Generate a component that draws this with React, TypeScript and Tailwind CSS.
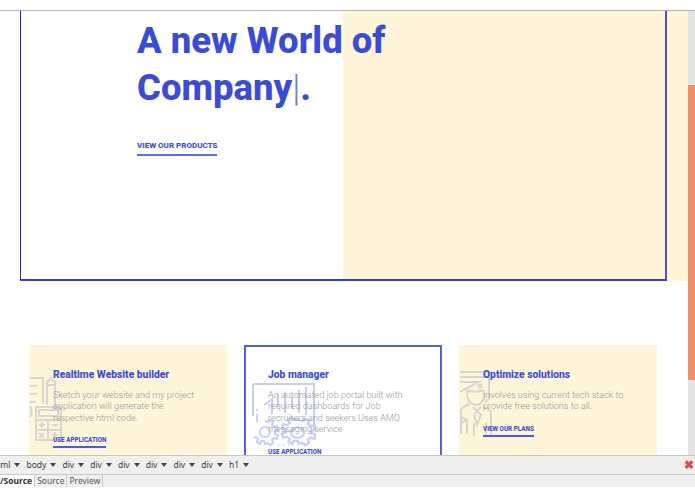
const roboto = "font-['Roboto',sans-serif]";

function CalcIcon() {
  return (
    <svg viewBox="0 0 34 64" fill="none" stroke="#d8d6d2" strokeWidth="2" className="absolute left-0 top-[32px] w-[34px] h-[64px]">
      <path d="M1 1h13v26M1 9h7M1 17h7M1 25h6" />
      <path d="M18 28V5l4-4 4 4v24M18 8h8" />
      <path d="M1 29c2 3 2 8 0 11" />
      <path d="M7 30h25v33H7z" />
      <path d="M10 33h19v6H10zM7 43h25M7 53h25M19 43v20" />
      <path d="M10 48h6M13 45v6M23 48h6M10 56l5 5M15 56l-5 5M23 58h6M26 55v6" />
    </svg>
  );
}

function GearIcon() {
  return (
    <svg viewBox="0 0 64 64" fill="none" stroke="#cbcdf3" strokeWidth="2" className="absolute left-[6px] top-[36px] w-[64px] h-[64px]">
      <path d="M1 1h61v46M1 1v32" />
      <path d="M12 22l8-6v15M26 24V11M33 30V9M40 26V14M47 30V7M54 32V4" />
      <path d="M5 26v2M5 31v8" />
      <g transform="translate(2 0)">
        <path d="M11 38l3 1 2-2 3 2-1 3 2 2 3-1 1 4-3 1v3l3 1-1 4-3-1-2 2 1 3-3 2-2-2-3 1-1-3H7l-1 3-3-2 1-3-2-2-2 1" />
        <circle cx="11" cy="49" r="5" />
      </g>
      <g transform="translate(45.5 49.5) scale(1.3 1.05) translate(-45 -49)">
        <path d="M46 37l3 1 2-2 3 2-1 3 2 2 3-1 1 4-3 1v3l3 1-1 4-3-1-2 2 1 3-3 2-2-2-3 1-1-3h-3l-1 3-3-2 1-3-2-2-3 1-1-4 3-1v-3l-3-1 1-4 3 1 2-2-1-3 3-2 2 2z" />
        <circle cx="45" cy="49" r="5" />
      </g>
      <path d="M26 62h1M31 62h1M36 62h1" />
    </svg>
  );
}

function PersonIcon() {
  return (
    <svg viewBox="0 0 34 66" fill="none" stroke="#d6d5d2" strokeWidth="2" className="absolute left-0 top-[26px] w-[34px] h-[66px]">
      <path d="M1 1h30M1 6h27M1 11h18l-18 10" />
      <path d="M30 6v22l-4 3" />
      <circle cx="21" cy="15" r="1.5" />
      <path d="M9 18c-2 4-1 11 3 14 4 3 9 2 11-1 2-3 3-6 2-9" />
      <path d="M9 20c5 1 11 1 16-1" />
      <path d="M11 33c-4 2-8 3-9 6v24M2 46l6 3-6 3M8 49v14" />
      <path d="M14 36l4 4 4-4M18 40l-3 4 3 10 4-10zM24 36c3 1 7 2 8 5v24M27 52v13M15 52v13" />
    </svg>
  );
}

function Card({ title, lines, link, boxed, icon }: { title: string; lines: string[]; link: string; boxed?: boolean; icon: React.ReactNode }) {
  return (
    <div className={`relative w-[198px] h-[170px] ${boxed ? "border-2 border-[#5660d2] bg-white px-[22px] pt-[21px]" : "bg-[#fff5d8] px-[24px] pt-[23px]"}`}>
      {icon}
      <h3 className={`relative text-[10.3px] leading-[13px] font-extrabold text-[#3a4bd6] whitespace-nowrap ${roboto}`}>{title}</h3>
      <p className={`relative mt-[8.5px] text-[9.1px] leading-[11.5px] font-light text-[#96969e] whitespace-nowrap ${roboto}`}>
        {lines.map((l) => (
          <span key={l} className="block">{l}</span>
        ))}
      </p>
      <a className={`relative inline-block mt-[11px] pb-[1px] text-[6.3px] leading-[9px] font-extrabold text-[#3a4bd6] border-b-2 border-[#4f5cd8] ${roboto}`}>{link}</a>
    </div>
  );
}

const crumbs = ["html", "body", "div", "div", "div", "div", "div", "div", "h1"];

export default function App() {
  return (
    <div className="flex h-[494px] w-[695px] flex-col overflow-hidden bg-white">
      <div className="h-[11px] shrink-0 border-b border-[#b4b4b4] bg-white" />

      <div className="flex min-h-0 flex-1">
        <div className="w-[688px] shrink-0 overflow-hidden">
          {/* hero */}
          <div className="flex h-[270px] pl-[20px]">
            <div className={`relative z-10 w-[323px] border-b-2 border-l border-b-[#3a3ad0] border-l-[#2020c8] pl-[116px] ${roboto}`}>
              <h1 className="pt-[6px] text-[36.5px] leading-[47px] font-extrabold text-[#3a4bd6] whitespace-nowrap">
                A new World of
                <br />
                Company<span className="font-light text-[#6f7bdc]">|</span>.
              </h1>
              <a className="mt-[30px] inline-block border-b-2 border-[#5f6dda] pb-[3px] text-[8px] leading-[10px] font-extrabold text-[#3a4bd6]">
                VIEW OUR PRODUCTS
              </a>
            </div>
            <div className="flex-1 bg-[#fff5d8]">
              <div className="h-full w-[324px] border-b-2 border-r-2 border-b-[#3a3ad0] border-r-[#5050c4]" />
            </div>
          </div>

          {/* cards */}
          <div className="mt-[64px] flex gap-[17px] pl-[29px]">
            <Card
              title="Realtime Website builder"
              lines={["Sketch your website and my project", "application will generate the", "respective html code."]}
              link="USE APPLICATION"
              icon={<CalcIcon />}
            />
            <Card
              boxed
              title="Job manager"
              lines={["An automated job portal built with", "required dashboards for Job", "recruiters and seekers.Uses AMQ", "messaging service"]}
              link="USE APPLICATION"
              icon={<GearIcon />}
            />
            <Card
              title="Optimize solutions"
              lines={["Involves using current tech stack to", "provide free solutions to all."]}
              link="VIEW OUR PLANS"
              icon={<PersonIcon />}
            />
          </div>
        </div>

        {/* scrollbar */}
        <div className="flex w-[7px] shrink-0 flex-col bg-[#e4e4e4]">
          <div className="mt-[74px] h-[295px] bg-[#ef8f68]" />
        </div>
      </div>

      {/* editor status bars */}
      <div className="flex h-[20px] shrink-0 items-center justify-between border-y border-[#c8c8c8] bg-[#efefef] font-['Noto_Sans',sans-serif] text-[8.5px] text-[#3c3c3c]">
        <div className="ml-[-8px] flex items-center gap-[4px] whitespace-nowrap">
          {crumbs.map((c, i) => (
            <span key={i} className="flex items-center gap-[4px] pr-[2px]">
              {c}
              <span className="h-0 w-0 border-x-[3px] border-t-[4px] border-x-transparent border-t-[#444]" />
            </span>
          ))}
        </div>
        <span className="mr-[1px] text-[12px] leading-none font-bold text-[#e0454a]">✖</span>
      </div>
      <div className="flex h-[12px] shrink-0 items-stretch bg-[#f0f0f0] font-['Noto_Sans',sans-serif] text-[8.5px] leading-[12px] text-[#555]">
        <span className="ml-[-21px] border-r border-[#c8c8c8] bg-white pr-[2px] font-bold text-[#333]">Html/Source</span>
        <span className="border-r border-[#c8c8c8] px-[2px]">Source</span>
        <span className="border-r border-[#c8c8c8] px-[2px]">Preview</span>
      </div>
      <div className="h-[7px] shrink-0 bg-white" />
    </div>
  );
}
